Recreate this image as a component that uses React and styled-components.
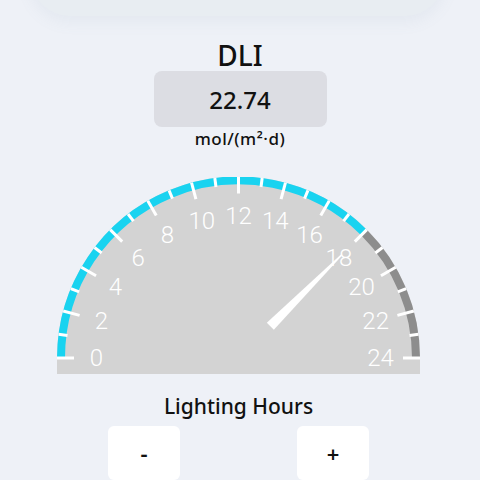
import styled, { createGlobalStyle } from "styled-components";

const GlobalStyle = createGlobalStyle`
  html, body {
    margin: 0;
    padding: 0;
    background: #eef1f7;
    overflow: hidden;
  }
  body {
    font-family: "Noto Sans", "DejaVu Sans", sans-serif;
    color: #111;
  }
`;

const Page = styled.div`
  width: 480px;
  height: 480px;
  display: flex;
  flex-direction: column;
  align-items: center;
  overflow: hidden;
`;

const TopCard = styled.div`
  width: 415px;
  height: 80px;
  margin-top: -64px;
  margin-right: 5px;
  flex-shrink: 0;
  border-radius: 40px;
  background: #e8edf2;
  box-shadow: 0 6px 16px rgba(120, 140, 160, 0.08);
`;

const Title = styled.div`
  margin-top: 25px;
  font-size: 28px;
  line-height: 28px;
  font-weight: 500;
`;

const ValueBox = styled.div`
  margin-top: 2px;
  width: 173px;
  height: 57px;
  border-radius: 8px;
  background: #dcdde3;
  display: flex;
  align-items: center;
  justify-content: center;
  font-size: 24px;
  font-weight: 500;
`;

const Unit = styled.div`
  margin-top: 2px;
  font-size: 17px;
  line-height: 20px;
  font-weight: 500;
  letter-spacing: 0.5px;
`;

const GaugeSvg = styled.svg`
  margin-top: 28px;
  margin-right: 3px;
  display: block;
  flex-shrink: 0;
`;

const Label = styled.div`
  margin-top: 20px;
  margin-right: 3px;
  font-size: 21px;
  line-height: 24px;
  font-weight: 500;
`;

const ButtonRow = styled.div`
  margin-top: 8px;
  margin-right: 3px;
  display: flex;
  gap: 117px;
`;

const StepButton = styled.button`
  width: 72px;
  height: 54px;
  border: none;
  border-radius: 6px;
  background: #ffffff;
  font-family: inherit;
  font-size: 22px;
  font-weight: 600;
  color: #111;
  padding: 0;
  flex-shrink: 0;
`;

const W = 363;
const H = 197;
const CX = 181.5;
const CY = 181;
const R = 181.5;
const BAND = 8;
const MAX = 24;

const pt = (v, r) => {
  const a = Math.PI - (v / MAX) * Math.PI;
  return [CX + r * Math.cos(a), CY - r * Math.sin(a)];
};

const arcPath = (from, to, r) => {
  const [x1, y1] = pt(from, r);
  const [x2, y2] = pt(to, r);
  return `M ${x1} ${y1} A ${r} ${r} 0 0 1 ${x2} ${y2}`;
};

function Gauge({ value }) {
  const ticks = [];
  for (let i = 0; i <= MAX; i++) {
    const major = i % 2 === 0;
    const [x1, y1] = pt(i, R);
    const [x2, y2] = pt(i, R - (major ? 17 : 9));
    ticks.push(
      <line key={i} x1={x1} y1={y1} x2={x2} y2={y2} stroke="#ffffff" strokeWidth="3" />
    );
  }

  const labels = [];
  for (let i = 0; i <= MAX; i += 2) {
    const [x, y] = pt(i, 142);
    labels.push(
      <text
        key={i}
        x={x}
        y={y}
        textAnchor="middle"
        dominantBaseline="central"
        fill="#ffffff"
        fontFamily="Roboto, 'Liberation Sans', sans-serif"
        fontWeight="300"
        fontSize="24"
      >
        {i}
      </text>
    );
  }

  const a = Math.PI - (value / MAX) * Math.PI;
  const nx = Math.cos(a);
  const ny = -Math.sin(a);
  const px = -ny;
  const py = nx;
  const [bx, by] = pt(value, 45);
  const [tx, ty] = pt(value, 146);
  const needle = [
    [bx + px * 5, by + py * 5],
    [tx + px * 0.8, ty + py * 0.8],
    [tx - px * 0.8, ty - py * 0.8],
    [bx - px * 5, by - py * 5],
  ]
    .map((p) => p.join(","))
    .join(" ");

  return (
    <GaugeSvg width={W} height={H} viewBox={`0 0 ${W} ${H}`}>
      <path
        d={`M 0 ${CY} A ${R} ${R} 0 0 1 ${W} ${CY} L ${W} ${H} L 0 ${H} Z`}
        fill="#d3d3d3"
      />
      <path d={arcPath(0, 18, R - BAND / 2)} stroke="#19d3f0" strokeWidth={BAND} fill="none" />
      <path d={arcPath(18, 24, R - BAND / 2)} stroke="#8d8d8d" strokeWidth={BAND} fill="none" />
      {ticks}
      {labels}
      <polygon points={needle} fill="#ffffff" />
    </GaugeSvg>
  );
}

export default function App() {
  return (
    <Page>
      <GlobalStyle />
      <TopCard />
      <Title>DLI</Title>
      <ValueBox>22.74</ValueBox>
      <Unit>mol/(m²·d)</Unit>
      <Gauge value={18} />
      <Label>Lighting Hours</Label>
      <ButtonRow>
        <StepButton>-</StepButton>
        <StepButton>+</StepButton>
      </ButtonRow>
    </Page>
  );
}
